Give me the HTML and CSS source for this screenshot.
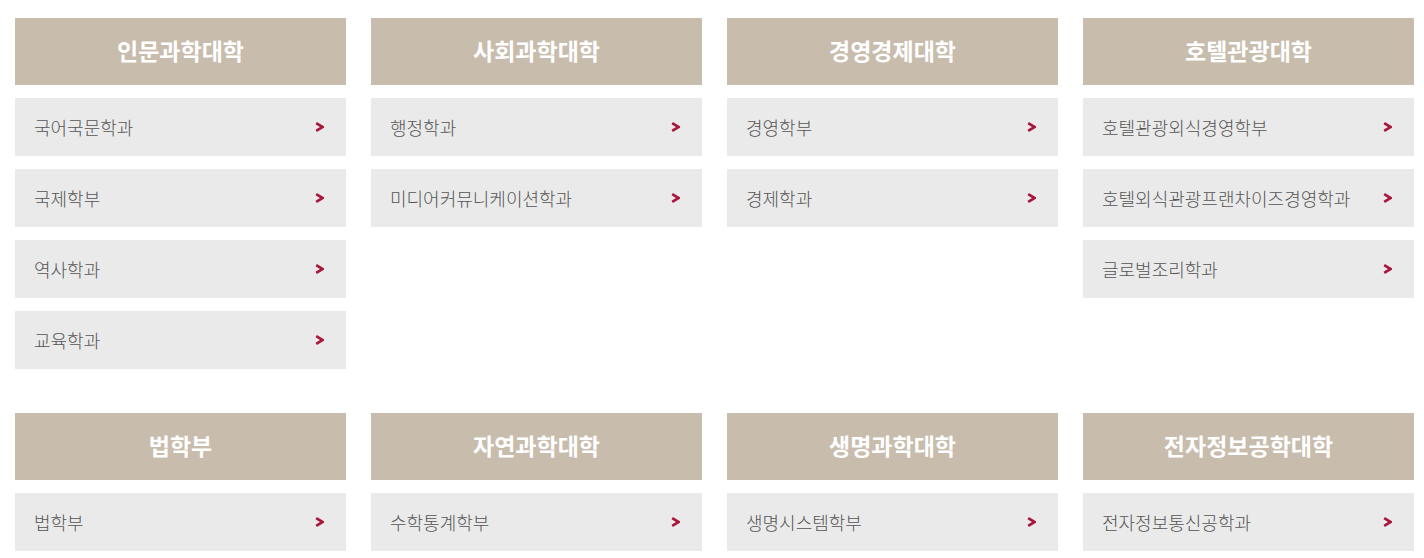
FILE: index.html
```html
<!DOCTYPE html>
<html lang="ko">
<head>
<meta charset="utf-8">
<title>대학 안내</title>
<link rel="stylesheet" href="styles.css">
</head>
<body>
<div class="page">
  <section class="row">
    <div class="college">
      <h2 class="college-title">인문과학대학</h2>
      <ul class="dept-list">
        <li class="dept"><span>국어국문학과</span><svg class="arrow" viewBox="0 0 9 10"><polyline points="1.2,1.2 7.6,5 1.2,8.8"/></svg></li>
        <li class="dept"><span>국제학부</span><svg class="arrow" viewBox="0 0 9 10"><polyline points="1.2,1.2 7.6,5 1.2,8.8"/></svg></li>
        <li class="dept"><span>역사학과</span><svg class="arrow" viewBox="0 0 9 10"><polyline points="1.2,1.2 7.6,5 1.2,8.8"/></svg></li>
        <li class="dept"><span>교육학과</span><svg class="arrow" viewBox="0 0 9 10"><polyline points="1.2,1.2 7.6,5 1.2,8.8"/></svg></li>
      </ul>
    </div>
    <div class="college">
      <h2 class="college-title">사회과학대학</h2>
      <ul class="dept-list">
        <li class="dept"><span>행정학과</span><svg class="arrow" viewBox="0 0 9 10"><polyline points="1.2,1.2 7.6,5 1.2,8.8"/></svg></li>
        <li class="dept"><span>미디어커뮤니케이션학과</span><svg class="arrow" viewBox="0 0 9 10"><polyline points="1.2,1.2 7.6,5 1.2,8.8"/></svg></li>
      </ul>
    </div>
    <div class="college">
      <h2 class="college-title">경영경제대학</h2>
      <ul class="dept-list">
        <li class="dept"><span>경영학부</span><svg class="arrow" viewBox="0 0 9 10"><polyline points="1.2,1.2 7.6,5 1.2,8.8"/></svg></li>
        <li class="dept"><span>경제학과</span><svg class="arrow" viewBox="0 0 9 10"><polyline points="1.2,1.2 7.6,5 1.2,8.8"/></svg></li>
      </ul>
    </div>
    <div class="college">
      <h2 class="college-title">호텔관광대학</h2>
      <ul class="dept-list">
        <li class="dept"><span>호텔관광외식경영학부</span><svg class="arrow" viewBox="0 0 9 10"><polyline points="1.2,1.2 7.6,5 1.2,8.8"/></svg></li>
        <li class="dept"><span>호텔외식관광프랜차이즈경영학과</span><svg class="arrow" viewBox="0 0 9 10"><polyline points="1.2,1.2 7.6,5 1.2,8.8"/></svg></li>
        <li class="dept"><span>글로벌조리학과</span><svg class="arrow" viewBox="0 0 9 10"><polyline points="1.2,1.2 7.6,5 1.2,8.8"/></svg></li>
      </ul>
    </div>
  </section>
  <section class="row">
    <div class="college">
      <h2 class="college-title">법학부</h2>
      <ul class="dept-list">
        <li class="dept"><span>법학부</span><svg class="arrow" viewBox="0 0 9 10"><polyline points="1.2,1.2 7.6,5 1.2,8.8"/></svg></li>
      </ul>
    </div>
    <div class="college">
      <h2 class="college-title">자연과학대학</h2>
      <ul class="dept-list">
        <li class="dept"><span>수학통계학부</span><svg class="arrow" viewBox="0 0 9 10"><polyline points="1.2,1.2 7.6,5 1.2,8.8"/></svg></li>
      </ul>
    </div>
    <div class="college">
      <h2 class="college-title">생명과학대학</h2>
      <ul class="dept-list">
        <li class="dept"><span>생명시스템학부</span><svg class="arrow" viewBox="0 0 9 10"><polyline points="1.2,1.2 7.6,5 1.2,8.8"/></svg></li>
      </ul>
    </div>
    <div class="college">
      <h2 class="college-title">전자정보공학대학</h2>
      <ul class="dept-list">
        <li class="dept"><span>전자정보통신공학과</span><svg class="arrow" viewBox="0 0 9 10"><polyline points="1.2,1.2 7.6,5 1.2,8.8"/></svg></li>
      </ul>
    </div>
  </section>
</div>
</body>
</html>
```

FILE: styles.css
```css
html, body {
  margin: 0;
  padding: 0;
  background: #ffffff;
}

body {
  font-family: "Noto Sans CJK KR", "Noto Sans", sans-serif;
}

.page {
  padding: 18px 10px 0 15px;
  display: flex;
  flex-direction: column;
  gap: 44px;
}

.row {
  display: grid;
  grid-template-columns: repeat(4, 331px);
  column-gap: 25px;
  align-items: start;
}

.college {
  display: flex;
  flex-direction: column;
  gap: 13px;
}

.college-title {
  margin: 0;
  height: 67px;
  box-sizing: border-box;
  padding-bottom: 3px;
  background: #c8bcad;
  color: #ffffff;
  font-size: 23px;
  font-weight: 700;
  display: flex;
  align-items: center;
  justify-content: center;
}

.dept-list {
  list-style: none;
  margin: 0;
  padding: 0;
  display: flex;
  flex-direction: column;
  gap: 13px;
}

.dept {
  height: 58px;
  box-sizing: border-box;
  background: #eaeaea;
  color: #555555;
  font-size: 18px;
  font-weight: 300;
  display: flex;
  align-items: center;
  justify-content: space-between;
  padding: 0 22px 1px 19px;
}

.arrow {
  width: 9px;
  height: 10px;
  fill: none;
  stroke: #a8173c;
  stroke-width: 2.7;
  stroke-linecap: butt;
  stroke-linejoin: miter;
}
```
